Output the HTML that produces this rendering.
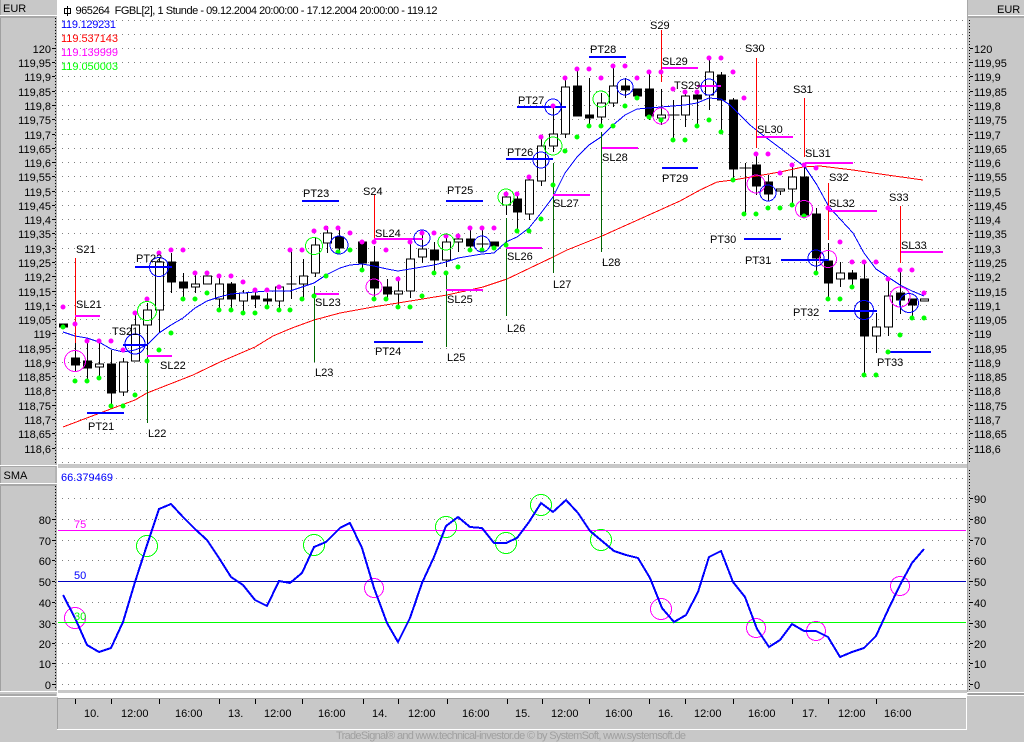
<!DOCTYPE html>
<html><head><meta charset="utf-8"><title>FGBL Chart</title>
<style>
html,body{margin:0;padding:0;width:1024px;height:742px;overflow:hidden;background:#c8c8c8}
svg{display:block}
text{font-family:"Liberation Sans",sans-serif;font-size:11px;fill:#000}
.e text{text-anchor:end}
</style></head><body>
<svg width="1024" height="742" viewBox="0 0 1024 742" xmlns="http://www.w3.org/2000/svg" shape-rendering="crispEdges">
<rect width="1024" height="742" fill="#c8c8c8"/>
<!-- left panel -->
<rect x="0" y="0" width="1" height="692" fill="#a0a0a0"/>
<rect x="0" y="15" width="57" height="1" fill="#fff"/><rect x="0" y="16" width="56" height="2" fill="#a8a8a8"/>
<rect x="55" y="16" width="2" height="675" fill="#b4b4b4"/>
<rect x="0" y="465" width="57" height="1" fill="#fff"/><rect x="0" y="466" width="56" height="1" fill="#a8a8a8"/>
<rect x="0" y="483" width="57" height="1" fill="#fff"/><rect x="0" y="484" width="56" height="2" fill="#a8a8a8"/>
<rect x="0" y="691" width="57" height="1" fill="#fff"/><rect x="0" y="694" width="56" height="2" fill="#a8a8a8"/><rect x="0" y="696" width="57" height="1" fill="#fff"/>
<rect x="57" y="0" width="1" height="697" fill="#fff"/>
<!-- chart areas -->
<rect x="58" y="0" width="909" height="464" fill="#fff"/>
<rect x="58" y="468" width="909" height="222" fill="#fff"/>
<rect x="58" y="693" width="909" height="5" fill="#fff"/>
<rect x="58" y="698" width="908" height="1" fill="#a0a0a0"/><rect x="57" y="698" width="1" height="31" fill="#a0a0a0"/>
<rect x="57" y="729" width="910" height="1" fill="#fff"/><rect x="966" y="698" width="1" height="32" fill="#fff"/>
<!-- right panel -->
<rect x="967" y="0" width="1" height="692" fill="#a8a8a8"/>
<rect x="968" y="15" width="56" height="1" fill="#fff"/><rect x="968" y="16" width="56" height="2" fill="#a8a8a8"/>
<rect x="968" y="465" width="56" height="3" fill="#c8c8c8"/>
<rect x="967" y="692" width="57" height="1" fill="#fff"/><rect x="968" y="693" width="56" height="2" fill="#a0a0a0"/><rect x="967" y="695" width="57" height="1" fill="#fff"/>
<!-- dotted axis lines -->
<path d="M55.5 18V464M55.5 486V690M969.5 20V464M969.5 470V690" stroke="#000" stroke-dasharray="1 2" fill="none"/>
<!-- ticks -->
<path d="M52 48.5h3M52 62.5h3M52 76.5h3M52 91.5h3M52 105.5h3M52 119.5h3M52 134.5h3M52 148.5h3M52 162.5h3M52 176.5h3M52 191.5h3M52 205.5h3M52 219.5h3M52 233.5h3M52 248.5h3M52 262.5h3M52 276.5h3M52 291.5h3M52 305.5h3M52 319.5h3M52 333.5h3M52 348.5h3M52 362.5h3M52 376.5h3M52 390.5h3M52 405.5h3M52 419.5h3M52 433.5h3M52 448.5h3M52 519.5h3M52 540.5h3M52 560.5h3M52 581.5h3M52 602.5h3M52 623.5h3M52 643.5h3M52 663.5h3M52 684.5h3M970 48.5h3M970 62.5h3M970 76.5h3M970 91.5h3M970 105.5h3M970 119.5h3M970 134.5h3M970 148.5h3M970 162.5h3M970 176.5h3M970 191.5h3M970 205.5h3M970 219.5h3M970 233.5h3M970 248.5h3M970 262.5h3M970 276.5h3M970 291.5h3M970 305.5h3M970 319.5h3M970 333.5h3M970 348.5h3M970 362.5h3M970 376.5h3M970 390.5h3M970 405.5h3M970 419.5h3M970 433.5h3M970 448.5h3M970 498.5h3M970 519.5h3M970 540.5h3M970 560.5h3M970 581.5h3M970 602.5h3M970 623.5h3M970 643.5h3M970 663.5h3M970 684.5h3" stroke="#000" fill="none"/>
<!-- grid -->
<path d="M62 20.5H966M62 34.5H966M62 48.5H966M62 62.5H966M62 76.5H966M62 91.5H966M62 105.5H966M62 119.5H966M62 134.5H966M62 148.5H966M62 162.5H966M62 176.5H966M62 191.5H966M62 205.5H966M62 219.5H966M62 233.5H966M62 248.5H966M62 262.5H966M62 276.5H966M62 291.5H966M62 305.5H966M62 319.5H966M62 333.5H966M62 348.5H966M62 362.5H966M62 376.5H966M62 390.5H966M62 405.5H966M62 419.5H966M62 433.5H966M62 448.5H966M62 462.5H966M62 478.5H966M62 498.5H966M62 519.5H966M62 540.5H966M62 560.5H966M62 602.5H966M62 643.5H966M62 663.5H966M62 684.5H966" stroke="#808080" stroke-dasharray="1 5" fill="none"/>

<!-- wicks -->
<g transform="translate(.5 0)">
<path fill="none" stroke="#000" d="M75 342V372M87 343V380M99 343V377M111 350V405M123 358V396M135 315V361M147 303V350M159 257V333M171 253V293M183 273V297M195 275V293M219 278V308M231 282V308M243 290V312M255 290V308M267 293V306M279 288V308M291 250V299M286 284H296M303 259V298M315 237V277M327 226V253M339 230V252M362 242V268M374 246V298M387 279V298M398 280V307M410 242V298M422 233V263M434 242V272M446 236V267M458 235V252M470 228V250M482 228V250M476 244H488M506 193V215M517 193V231M529 177V220M541 137V186M553 107V152M565 78V138M577 68V116M589 78V125M601 93V125M613 67V107M625 78V98M649 72V120M661 89V125M673 100V140M667 115H679M685 92V127M697 92V125M709 58V110M721 72V132M733 98V180M745 163V213M739 168H751M756 155V195M768 175V201M780 189V195M792 167V205M804 165V216M816 208V272M828 243V298M840 262V287M852 270V287M864 262V375M876 313V353M888 278V336M900 270V314M912 299V317"/>
<!-- black bodies -->
<path fill="#000" stroke="#000" d="M59 324h8v3h-8zM71 358h8v7h-8zM83 361h8v7h-8zM107 364h8v29h-8zM167 262h8v20h-8zM179 282h8v6h-8zM227 284h8v15h-8zM251 296h8v3h-8zM263 299h8v2h-8zM335 237h8v11h-8zM358 242h8v21h-8zM370 262h8v26h-8zM383 287h8v7h-8zM430 250h8v10h-8zM466 239h8v7h-8zM490 242h8v4h-8zM513 199h8v13h-8zM573 86h8v30h-8zM585 115h8v3h-8zM621 86h8v4h-8zM633 89h8v7h-8zM645 89h8v27h-8zM693 95h8v4h-8zM717 75h8v25h-8zM729 100h8v69h-8zM752 165h8v21h-8zM764 182h8v12h-8zM800 177h8v38h-8zM812 214h8v44h-8zM824 261h8v22h-8zM848 273h8v6h-8zM860 279h8v57h-8zM896 293h8v7h-8zM908 299h8v6h-8z"/>
<!-- white bodies -->
<path fill="#fff" stroke="#000" d="M95 364h8v3h-8zM119 362h8v30h-8zM131 325h8v36h-8zM143 310h8v15h-8zM155 262h8v48h-8zM191 284h8v3h-8zM203 276h8v8h-8zM215 284h8v15h-8zM239 293h8v8h-8zM275 287h8v14h-8zM299 276h8v8h-8zM311 245h8v28h-8zM323 233h8v10h-8zM394 291h8v3h-8zM406 259h8v32h-8zM418 249h8v8h-8zM442 242h8v18h-8zM454 239h8v3h-8zM502 197h8v8h-8zM525 180h8v34h-8zM537 146h8v35h-8zM549 134h8v12h-8zM561 87h8v47h-8zM597 103h8v14h-8zM609 86h8v17h-8zM657 115h8v3h-8zM681 96h8v19h-8zM705 72h8v23h-8zM776 189h8v2h-8zM788 177h8v12h-8zM836 273h8v6h-8zM872 327h8v9h-8zM884 296h8v31h-8zM920 299h8v2h-8z"/>
</g>

<!-- moving averages -->
<polyline fill="none" stroke="#f00" points="63,427 100,413 135,400 147,393 170,384 193,375 220,362 255,347 273,336 292,328 314,320 340,313 373,307 398,303 447,295 483,287 507,279 553,257 567,250 602,236 680,201 700,190 717,182 733,180 757,176 780,172 803,167 820,166 853,170 880,174 923,180"/>
<polyline fill="none" stroke="#00f" points="63,332 75,336 87,338 99,342 111,349 123,352 135,350 147,345 159,333 171,325 183,318 195,308 207,301 219,297 231,294 243,293 255,292 267,291 279,291 290,291 302,287 314,283 326,275 340,268 350,265 362,264 374,266 387,269 398,271 410,269 422,267 434,265 446,262 458,258 470,256 482,254 494,253 506,242 517,237 529,228 541,213 553,197 565,173 577,157 589,145 601,137 613,125 625,115 637,109 649,108 661,107 673,106 685,105 697,103 709,98 721,99 730,105 750,125 760,133 780,148 793,158 805,167 817,185 829,207 841,220 853,233 864,253 876,269 888,277 900,285 912,291 924,296"/>

<!-- signal vertical lines -->
<g transform="translate(.5 0)">
<path fill="none" stroke="#f00" d="M75 258V343M374 195V242M661 30V82M756 58V148M804 98V157M828 183V240M900 206V263"/>
<path fill="none" stroke="#006400" d="M147 350V423M314 286V362M446 273V347M506 218V316M553 163V273M601 132V252"/>
</g>
<!-- stop lines -->
<path fill="none" stroke="#f0f" stroke-width="2" d="M75 316H100M147 356H172M315 294H339M374 239H423M446 290H483M506 248H542M553 195H590M602 148H638M662 68H698M697 86H721M757 137H793M805 163H853M829 211H877M901 252H943"/>
<!-- target lines -->
<path fill="none" stroke="#00f" stroke-width="2" d="M87 413H124M135 267H172M123 345H147M302 201H339M374 342H423M446 201H483M506 159H553M517 107H566M589 57H626M662 168H698M744 239H781M781 260H829M829 311H877M888 352H931"/>

<!-- dots -->
<g shape-rendering="auto">
<path fill="none" stroke="#f0f" stroke-width="5" stroke-linecap="round" d="M63 307h0M75 324h0M87 341h0M99 341h0M111 341h0M123 350h0M135 313h0M147 299h0M159 253h0M171 250h0M183 250h0M195 273h0M207 273h0M219 276h0M231 276h0M243 282h0M255 290h0M267 290h0M279 287h0M290 250h0M302 250h0M314 231h0M326 228h0M338 228h0M350 233h0M362 242h0M374 242h0M386 250h0M398 279h0M410 242h0M422 233h0M434 233h0M446 236h0M458 236h0M470 228h0M482 228h0M494 228h0M506 194h0M517 194h0M529 177h0M541 137h0M553 106h0M565 78h0M577 69h0M589 69h0M601 78h0M613 66h0M625 66h0M637 78h0M649 72h0M661 72h0M673 89h0M685 92h0M697 92h0M709 58h0M721 58h0M733 72h0M744 98h0M756 154h0M768 154h0M780 173h0M792 165h0M804 165h0M816 168h0M828 208h0M840 242h0M852 262h0M864 262h0M876 262h0M888 279h0M900 270h0M912 270h0M924 293h0"/>
<path fill="none" stroke="#0f0" stroke-width="5" stroke-linecap="round" d="M63 327h0M75 381h0M87 381h0M99 378h0M111 406h0M123 406h0M135 395h0M147 361h0M159 350h0M171 333h0M183 299h0M195 299h0M207 293h0M219 310h0M231 310h0M243 313h0M255 313h0M267 307h0M279 310h0M290 310h0M302 299h0M314 296h0M326 276h0M338 252h0M350 250h0M362 270h0M374 299h0M386 299h0M398 307h0M410 307h0M422 296h0M434 273h0M446 273h0M458 267h0M470 250h0M482 250h0M494 248h0M506 245h0M517 231h0M529 231h0M541 219h0M553 185h0M565 151h0M577 137h0M589 126h0M601 126h0M613 126h0M625 106h0M637 98h0M649 117h0M661 120h0M673 140h0M685 140h0M697 126h0M709 120h0M721 132h0M733 180h0M744 214h0M756 214h0M768 208h0M780 208h0M792 205h0M804 216h0M816 273h0M828 299h0M840 299h0M852 287h0M864 375h0M876 375h0M888 352h0M900 335h0M912 318h0M924 318h0"/>
</g>

<!-- circles -->
<g fill="none" stroke="#f0f">
<circle cx="75" cy="361" r="10.5"/><circle cx="374" cy="287" r="8"/><circle cx="661" cy="116" r="8"/><circle cx="756" cy="184" r="9"/><circle cx="804" cy="209" r="8.5"/><circle cx="828" cy="259" r="8.5"/><circle cx="900" cy="297" r="10"/>
<circle cx="75" cy="618" r="10.5"/><circle cx="374" cy="588" r="9.5"/><circle cx="661" cy="609" r="10.5"/><circle cx="756" cy="628" r="9.5"/><circle cx="816" cy="631" r="9.5"/><circle cx="900" cy="586" r="9.5"/>
</g>
<g fill="none" stroke="#0f0">
<circle cx="147" cy="311" r="9.5"/><circle cx="314" cy="246" r="8.5"/><circle cx="446" cy="242" r="8"/><circle cx="506" cy="197" r="8"/><circle cx="601" cy="99" r="8"/><circle cx="553" cy="146" r="9"/>
<circle cx="147" cy="546" r="10.5"/><circle cx="314" cy="545" r="10.5"/><circle cx="446" cy="527" r="10.5"/><circle cx="506" cy="543" r="10.5"/><circle cx="541" cy="505" r="10.5"/><circle cx="601" cy="540" r="10.5"/>
</g>
<g fill="none" stroke="#00f">
<circle cx="135" cy="344" r="10"/><circle cx="159" cy="267" r="9.5"/><circle cx="339" cy="245" r="9"/><circle cx="422" cy="238" r="8"/><circle cx="482" cy="244" r="8"/><circle cx="553" cy="107" r="8"/><circle cx="541" cy="160" r="8"/><circle cx="625" cy="87" r="8"/><circle cx="709" cy="87" r="8"/><circle cx="768" cy="193" r="8"/><circle cx="816" cy="258" r="8"/><circle cx="864" cy="310" r="9.5"/><circle cx="909" cy="303" r="9.5"/>
</g>

<!-- SMA levels -->
<path fill="none" stroke="#f0f" d="M58 530.5H966"/>
<path fill="none" stroke="#0000c0" d="M58 581.5H966"/>
<path fill="none" stroke="#0f0" d="M58 622.5H966"/>
<polyline fill="none" stroke="#00f" stroke-width="2" points="63,595 75,618 87,645 99,652 111,648 123,622 135,582 147,545 159,509 171,504 183,517 195,529 207,540 219,558 231,577 243,585 255,600 267,606 279,581 290,583 302,573 314,547 326,542 340,528 350,523 362,548 374,588 387,623 398,642 410,618 422,583 434,557 446,526 458,517 470,527 482,528 494,543 506,543 517,538 529,522 541,503 553,512 566,500 578,513 590,531 602,541 614,551 626,555 638,558 650,578 662,608 674,622 686,615 698,592 709,557 721,551 733,582 745,597 757,629 769,647 780,640 792,624 804,631 816,631 828,637 840,657 852,652 864,648 876,636 888,610 900,585 912,563 924,549"/>

<!-- time ticks -->
<path fill="none" stroke="#000" d="M75.5 699v5M111.5 699v5M159.5 699v5M219.5 699v5M255.5 699v5M302.5 699v5M363.5 699v5M398.5 699v5M447.5 699v5M507.5 699v5M542.5 699v5M589.5 699v5M649.5 699v5M685.5 699v5M733.5 699v5M792.5 699v5M828.5 699v5M876.5 699v5"/>

<!-- title icon -->
<path fill="#fff" stroke="#000" d="M67.5 6V16M64.5 8.5h6v5h-6z"/>

<g shape-rendering="auto">
<text x="3" y="12">EUR</text>
<text x="997" y="13">EUR</text>
<text x="3.5" y="479">SMA</text>
<text x="75.5" y="14" xml:space="preserve" textLength="362">965264  FGBL[2], 1 Stunde - 09.12.2004 20:00:00 - 17.12.2004 20:00:00 - 119.12</text>
<text x="61" y="28" textLength="55" style="fill:#00f">119.129231</text>
<text x="61" y="42" textLength="57" style="fill:#f00">119.537143</text>
<text x="61" y="56" textLength="57" style="fill:#f0f">119.139999</text>
<text x="61" y="70" textLength="57" style="fill:#0f0">119.050003</text>
<text x="61" y="481" style="fill:#00f">66.379469</text>
<text x="74" y="528" style="fill:#f0f">75</text>
<text x="74" y="579" style="fill:#00f">50</text>
<text x="74" y="620" style="fill:#0f0">30</text>

<g class="e">
<text x="51" y="53">120</text><text x="51" y="67">119,95</text><text x="51" y="81">119,9</text><text x="51" y="96">119,85</text><text x="51" y="110">119,8</text><text x="51" y="124">119,75</text><text x="51" y="139">119,7</text><text x="51" y="153">119,65</text><text x="51" y="167">119,6</text><text x="51" y="181">119,55</text><text x="51" y="196">119,5</text><text x="51" y="210">119,45</text><text x="51" y="224">119,4</text><text x="51" y="238">119,35</text><text x="51" y="253">119,3</text><text x="51" y="267">119,25</text><text x="51" y="281">119,2</text><text x="51" y="296">119,15</text><text x="51" y="310">119,1</text><text x="51" y="324">119,05</text><text x="51" y="338">119</text><text x="51" y="353">118,95</text><text x="51" y="367">118,9</text><text x="51" y="381">118,85</text><text x="51" y="395">118,8</text><text x="51" y="410">118,75</text><text x="51" y="424">118,7</text><text x="51" y="438">118,65</text><text x="51" y="453">118,6</text>
<text x="51" y="524">80</text><text x="51" y="545">70</text><text x="51" y="565">60</text><text x="51" y="586">50</text><text x="51" y="607">40</text><text x="51" y="628">30</text><text x="51" y="648">20</text><text x="51" y="668">10</text><text x="51" y="689">0</text>
</g>
<g>
<text x="974" y="53">120</text><text x="974" y="67">119,95</text><text x="974" y="81">119,9</text><text x="974" y="96">119,85</text><text x="974" y="110">119,8</text><text x="974" y="124">119,75</text><text x="974" y="139">119,7</text><text x="974" y="153">119,65</text><text x="974" y="167">119,6</text><text x="974" y="181">119,55</text><text x="974" y="196">119,5</text><text x="974" y="210">119,45</text><text x="974" y="224">119,4</text><text x="974" y="238">119,35</text><text x="974" y="253">119,3</text><text x="974" y="267">119,25</text><text x="974" y="281">119,2</text><text x="974" y="296">119,15</text><text x="974" y="310">119,1</text><text x="974" y="324">119,05</text><text x="974" y="338">119</text><text x="974" y="353">118,95</text><text x="974" y="367">118,9</text><text x="974" y="381">118,85</text><text x="974" y="395">118,8</text><text x="974" y="410">118,75</text><text x="974" y="424">118,7</text><text x="974" y="438">118,65</text><text x="974" y="453">118,6</text>
<text x="974" y="503">90</text><text x="974" y="524">80</text><text x="974" y="545">70</text><text x="974" y="565">60</text><text x="974" y="586">50</text><text x="974" y="607">40</text><text x="974" y="628">30</text><text x="974" y="648">20</text><text x="974" y="668">10</text><text x="974" y="689">0</text>
</g>

<!-- signal labels -->
<text x="76" y="253">S21</text><text x="76" y="308">SL21</text><text x="112" y="335">TS21</text><text x="136" y="262">PT22</text><text x="88" y="430">PT21</text><text x="148" y="437">L22</text><text x="160" y="369">SL22</text><text x="315" y="306">SL23</text><text x="315" y="376">L23</text><text x="303" y="197">PT23</text><text x="363" y="195">S24</text><text x="375" y="237">SL24</text><text x="375" y="355">PT24</text><text x="447" y="194">PT25</text><text x="447" y="303">SL25</text><text x="447" y="361">L25</text><text x="507" y="332">L26</text><text x="507" y="260">SL26</text><text x="553" y="207">SL27</text><text x="553" y="288">L27</text><text x="602" y="266">L28</text><text x="518" y="104">PT27</text><text x="507" y="156">PT26</text><text x="590" y="53">PT28</text><text x="650" y="29">S29</text><text x="662" y="65">SL29</text><text x="674" y="89">TS29</text><text x="602" y="161">SL28</text><text x="662" y="182">PT29</text><text x="745" y="52">S30</text><text x="757" y="133">SL30</text><text x="805" y="157">SL31</text><text x="793" y="93">S31</text><text x="829" y="181">S32</text><text x="829" y="207">SL32</text><text x="710" y="243">PT30</text><text x="745" y="264">PT31</text><text x="793" y="316">PT32</text><text x="889" y="201">S33</text><text x="901" y="249">SL33</text><text x="877" y="366">PT33</text>

<!-- time labels -->
<text x="84" y="717">10.</text><text x="121" y="717">12:00</text><text x="175" y="717">16:00</text><text x="228" y="717">13.</text><text x="264" y="717">12:00</text><text x="318" y="717">16:00</text><text x="372" y="717">14.</text><text x="408" y="717">12:00</text><text x="462" y="717">16:00</text><text x="515" y="717">15.</text><text x="551" y="717">12:00</text><text x="605" y="717">16:00</text><text x="658" y="717">16.</text><text x="694" y="717">12:00</text><text x="748" y="717">16:00</text><text x="802" y="717">17.</text><text x="838" y="717">12:00</text><text x="884" y="717">16:00</text>

<text x="336" y="739" textLength="350" style="fill:#a0a0a0">TradeSignal® and www.technical-investor.de © by SystemSoft, www.systemsoft.de</text>
</g>
</svg>
</body></html>
